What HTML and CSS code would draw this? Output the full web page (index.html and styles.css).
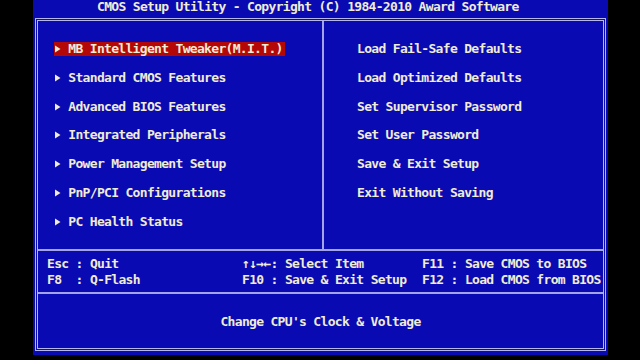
FILE: index.html
```html
<!DOCTYPE html>
<html lang="en">
<head>
    <meta charset="UTF-8">
    <title>CMOS Setup Utility</title>
    <link rel="stylesheet" href="styles.css">
</head>
<body>
    <div class="screen">
        <div class="title">CMOS Setup Utility - Copyright (C) 1984-2010 Award Software</div>

        <div class="frame">
            <div class="menus">
                <div class="col col-left">
                    <div class="item selected"><span class="arrow"><svg width="7" height="14" viewBox="0 0 7 14"><polygon points="0,3.5 5.5,7 0,10.5" fill="currentColor"/></svg></span>MB Intelligent Tweaker(M.I.T.)</div>
                    <div class="item"><span class="arrow"><svg width="7" height="14" viewBox="0 0 7 14"><polygon points="0,3.5 5.5,7 0,10.5" fill="currentColor"/></svg></span>Standard CMOS Features</div>
                    <div class="item"><span class="arrow"><svg width="7" height="14" viewBox="0 0 7 14"><polygon points="0,3.5 5.5,7 0,10.5" fill="currentColor"/></svg></span>Advanced BIOS Features</div>
                    <div class="item"><span class="arrow"><svg width="7" height="14" viewBox="0 0 7 14"><polygon points="0,3.5 5.5,7 0,10.5" fill="currentColor"/></svg></span>Integrated Peripherals</div>
                    <div class="item"><span class="arrow"><svg width="7" height="14" viewBox="0 0 7 14"><polygon points="0,3.5 5.5,7 0,10.5" fill="currentColor"/></svg></span>Power Management Setup</div>
                    <div class="item"><span class="arrow"><svg width="7" height="14" viewBox="0 0 7 14"><polygon points="0,3.5 5.5,7 0,10.5" fill="currentColor"/></svg></span>PnP/PCI Configurations</div>
                    <div class="item"><span class="arrow"><svg width="7" height="14" viewBox="0 0 7 14"><polygon points="0,3.5 5.5,7 0,10.5" fill="currentColor"/></svg></span>PC Health Status</div>
                </div>
                <div class="col col-right">
                    <div class="item">Load Fail-Safe Defaults</div>
                    <div class="item">Load Optimized Defaults</div>
                    <div class="item">Set Supervisor Password</div>
                    <div class="item">Set User Password</div>
                    <div class="item">Save &amp; Exit Setup</div>
                    <div class="item">Exit Without Saving</div>
                </div>
            </div>

            <div class="keys">
                <div>Esc : Quit</div>
                <div>&uarr;&darr;&rarr;&larr;: Select Item</div>
                <div>F11 : Save CMOS to BIOS</div>
                <div>F8  : Q-Flash</div>
                <div>F10 : Save &amp; Exit Setup</div>
                <div>F12 : Load CMOS from BIOS</div>
            </div>

            <div class="help">Change CPU's Clock &amp; Voltage</div>
        </div>
    </div>
</body>
</html>
```

FILE: styles.css
```css
body {
    margin: 0;
    width: 640px;
    height: 360px;
    background: #000;
    overflow: hidden;
    font-family: "DejaVu Sans Mono", "Liberation Mono", monospace;
    font-weight: bold;
    font-size: 13px;
    letter-spacing: -0.68px; /* squeeze to the 7.15px text-mode cell */
    line-height: 14.4px;
    color: #f0ecd6; /* BIOS cream text */
}

.screen {
    margin-left: 33px;
    width: 575px;
    height: 355px;
    background: #0a0ab2;
}

.title {
    height: 18px;
    line-height: 13px;
    padding-left: 64px;
    white-space: pre;
}

.frame {
    margin: 0 2px;
    height: 333px;
    box-sizing: border-box;
    border: 3px double #b6b6ee;
    display: flex;
    flex-direction: column;
}

.menus {
    height: 230px;
    box-sizing: border-box;
    border-bottom: 2px solid #a4a4e4;
    display: grid;
    grid-template-columns: 286px 1fr;
}

.col {
    display: flex;
    flex-direction: column;
    gap: 14.4px;
    padding-top: 21px;
    white-space: pre;
}

.col-left {
    box-sizing: border-box;
    border-right: 2px solid #a4a4e4;
    padding-left: 16px;
}

.col-right {
    padding-left: 33px;
}

.item {
    width: fit-content;
    height: 14.4px;
}

.item.selected {
    background: #b40808;
    padding-right: 2px;
}

.arrow {
    display: inline-block;
    width: 14.3px;
    height: 14.4px;
    vertical-align: top;
}

.arrow svg {
    display: block;
    margin-left: 1px;
}

/* hot keys, two rows x three columns */
.keys {
    height: 43px;
    box-sizing: border-box;
    border-bottom: 2px solid #a4a4e4;
    padding: 6px 0 0 9px;
    display: grid;
    grid-template-columns: 195px 180px 1fr;
    grid-auto-rows: 15.5px;
    white-space: pre;
}

.help {
    flex: 1;
    display: flex;
    align-items: center;
    justify-content: center;
    padding-top: 3px;
    white-space: pre;
}
```
